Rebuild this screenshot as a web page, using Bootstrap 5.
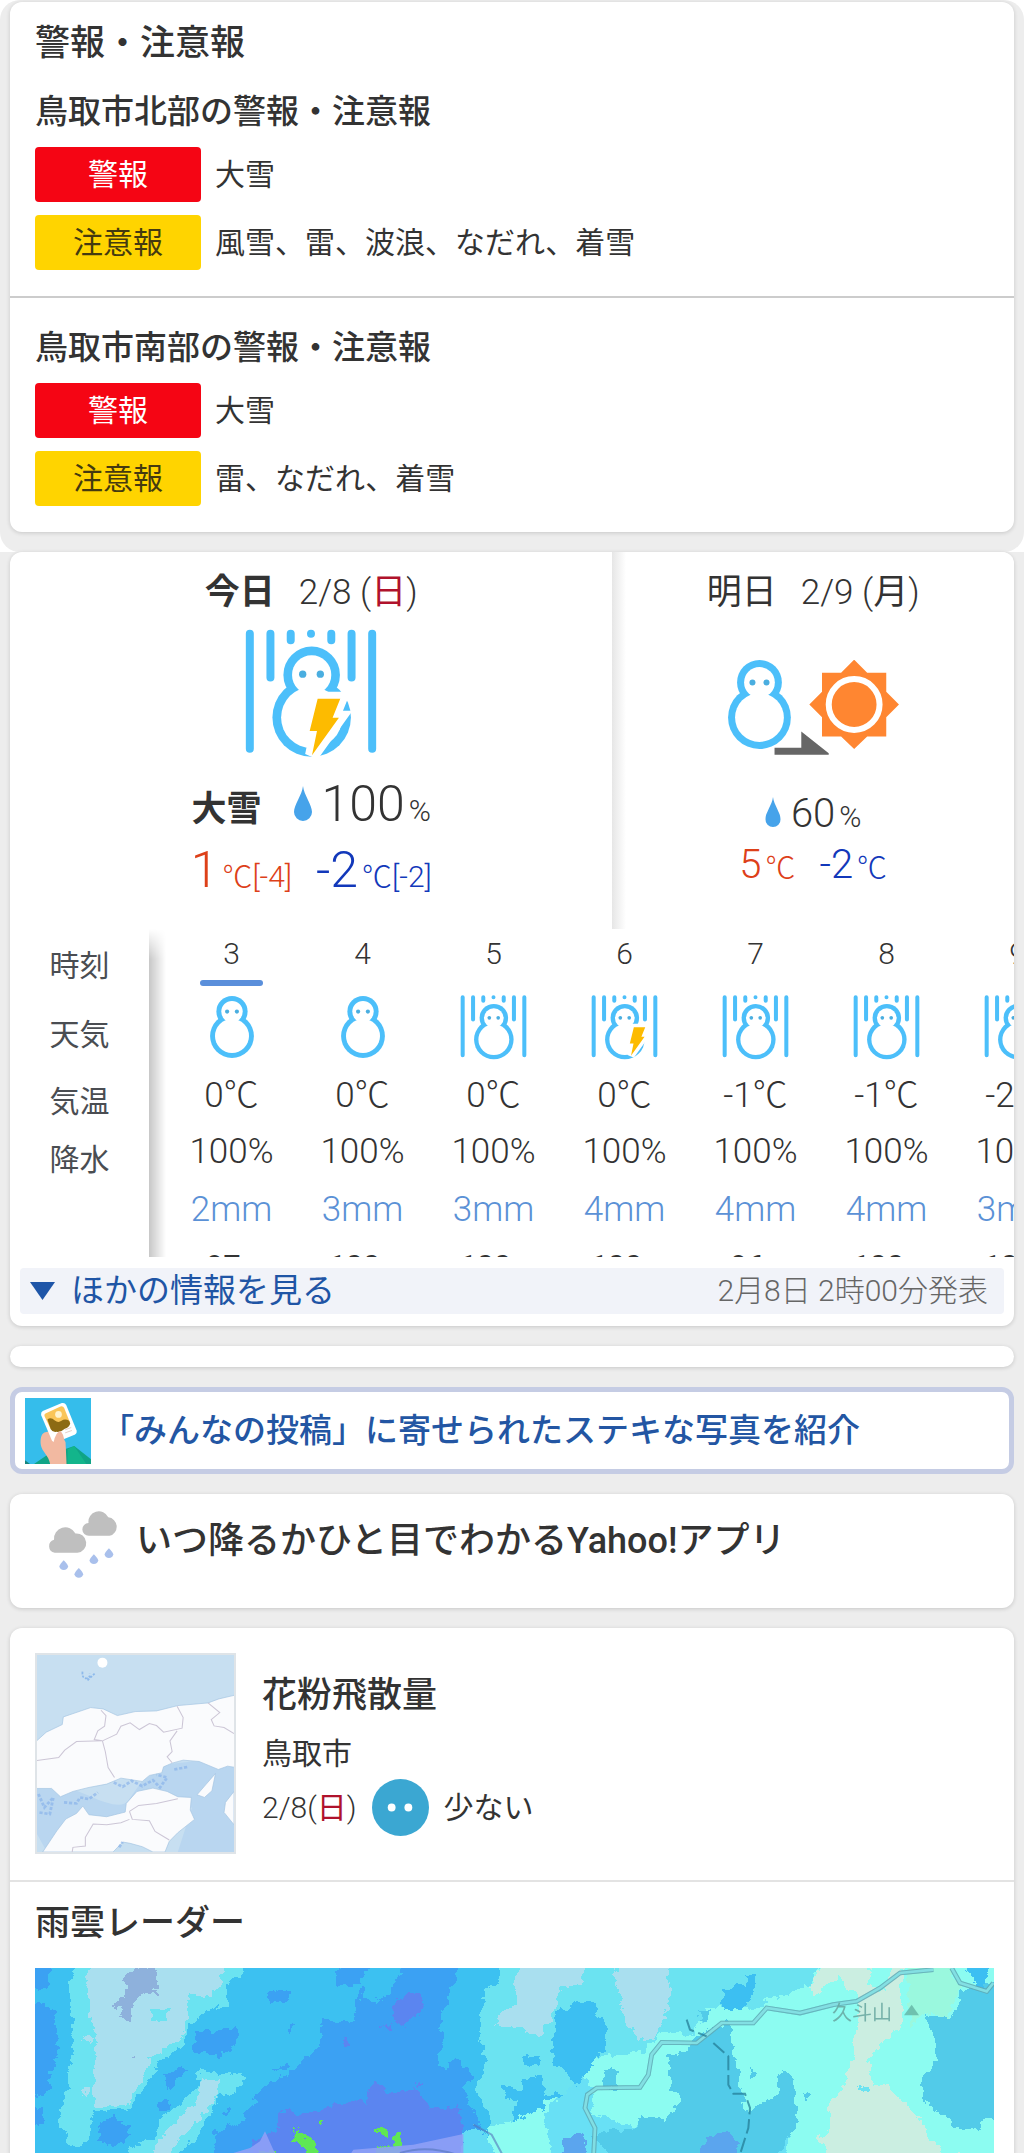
<!DOCTYPE html>
<html lang="ja">
<head>
<meta charset="utf-8">
<meta name="viewport" content="width=device-width, initial-scale=1">
<title>鳥取市の天気</title>
<link href="https://cdn.jsdelivr.net/npm/bootstrap@5.3.0/dist/css/bootstrap.min.css" rel="stylesheet">
<style>
body{background:#ededed;color:#333;font-family:Roboto,"Noto Sans CJK JP",sans-serif;font-size:30px;line-height:50px;font-weight:400}
h2,h3,p{margin:0}
svg{display:block;flex:none}
.wx-section{background:#ededed;border-radius:20px;padding:2px 10px 20px}
.wx-card{background:#fff;border-radius:12px;box-shadow:0 1px 4px rgba(0,0,0,.16);overflow:hidden}
.wx-title{font-size:35px;line-height:50px;font-weight:500}
.wx-sub{font-size:33px;line-height:50px;font-weight:500}
.warn-area{padding:25px 25px 26px}
.warn-area.first{padding-top:17px;border-bottom:2px solid #ccc}
.warn-area .wx-title{margin-bottom:18px}
.warn-area .wx-sub{margin-bottom:10px}
.warn-list{display:grid;gap:13px}
.warn-row{display:flex;align-items:center;gap:14px}
.warn-tag{width:166px;height:55px;line-height:55px;border-radius:4px;text-align:center}
.tag-red{background:#f50514;color:#fff}
.tag-yellow{background:#ffd400;color:#443a10}
.light{font-weight:300}
.strong-name{font-size:35px;line-height:1;font-weight:700}
.deg{font-family:"Noto Sans CJK JP",sans-serif}
.day{padding:20px 0 26px;text-align:center}
.day.today{width:60%}
.day.tomorrow{width:40%;background:linear-gradient(90deg,#e6e6e6,#fff 14px)}
.day-head{font-size:35px;line-height:42px}
.day-head .day-name{margin-right:24px}
.today-icon{margin:15px auto 13px}
.tomorrow-icon{margin:46px auto 33px}
.day-line{display:flex;justify-content:center;align-items:baseline;line-height:66px}
.day-line .big{font-size:50px}
.tomorrow .day-line{line-height:51px}
.tomorrow .big{font-size:40px}
.day-line .unit{font-size:30px;line-height:1;margin-left:4px}
.today .drop-icon{margin:0 10px 0 32px}
.tomorrow .drop-icon{margin-right:10px}
.hot{color:#dd4019}.cold{color:#1238ba}
.sun-day{color:#b0122c}
.hourly{position:relative;height:328px;overflow:hidden}
.hourly::after{content:"";position:absolute;left:139px;top:0;bottom:0;width:17px;background:linear-gradient(90deg,rgba(0,0,0,.22),rgba(0,0,0,0));-webkit-mask:linear-gradient(transparent,#000 30px);mask:linear-gradient(transparent,#000 30px)}
.hour-table{table-layout:fixed;width:1073px;text-align:center;font-size:35px;font-weight:300;border-collapse:collapse}
.hour-table th,.hour-table td{padding:0;height:58px;vertical-align:middle;line-height:50px}
.hour-table th[scope=row]{width:156px;padding:16px 17px 0 0;font-size:30px;font-weight:400;line-height:42px;color:#4a4d52}
.hour-table thead th{height:60px;font-size:30px;font-weight:300;vertical-align:top}
.hour-table .wx-icons>*{height:76px}
.hour-table svg{margin:0 auto}
.now-bar{display:block;width:63px;height:6px;border-radius:3px;background:#5a8fdb;margin:1px auto 0}
.rain-mm{color:#5b91d6}
.humid td{font-size:30px;font-weight:500;line-height:54px;vertical-align:top}
.humid small{font-size:22px}
.more-bar{background:#f1f3f9;border-radius:4px;margin:11px 10px 12px;height:46px;padding:0 16px 0 10px}
.more-btn{border:0;background:none;padding:0;color:#1f55a5;font-size:33px;line-height:46px}
.issued{color:#666;line-height:46px}
.blank-card{height:21px}
.post-link{border:5px solid #c5cce4;padding:5px 10px;height:87px;color:#2356a3;font-size:33px;font-weight:500;text-decoration:none;box-shadow:none;display:flex;align-items:center;gap:10px}
.app-link{height:114px;padding:17px 38px;color:#333;font-size:36px;font-weight:500;text-decoration:none;display:flex;gap:17px}
.app-link span{line-height:60px}
.wx-stack{padding:0 10px;display:grid;gap:20px}
.pollen{padding:25px 25px 26px;gap:26px;border-bottom:2px solid #e3e3e3}
.pollen-map{border:2px solid #dfe4e8}
.pollen-level{display:flex;align-items:center;gap:15px}
.radar-title{padding:17px 25px 19px}
.radar-map{padding:0 20px 0 25px}
.last-card{border-bottom-left-radius:0;border-bottom-right-radius:0}
</style>
<script src="https://cdn.jsdelivr.net/npm/bootstrap@5.3.0/dist/js/bootstrap.bundle.min.js"></script>
</head>
<body>
<svg width="0" height="0" class="position-absolute" aria-hidden="true">
<defs>
<symbol id="heavy" viewBox="196 208 396 388">
<path d="M210 222V568M272 222V354M333 222V242M394 222V222.1M455 222V242M516 222V354M578 222V568" stroke="#4cbffa" stroke-width="24" stroke-linecap="round" fill="none"/>
<g fill="#4cbffa"><circle cx="396" cy="346" r="85"/><circle cx="396" cy="474" r="118"/></g>
<g fill="#fff"><circle cx="396" cy="346" r="59"/><circle cx="396" cy="474" r="92"/></g>
<g fill="#4aaee0"><circle cx="369" cy="344" r="11"/><circle cx="422" cy="344" r="11"/></g>
</symbol>
<symbol id="bolt" viewBox="196 208 396 388"><path d="M414 418H482L459 475H478L397 588L412 515H390Z" fill="#fdbb00" stroke="#fff" stroke-width="42" paint-order="stroke"/></symbol>
<symbol id="snow" viewBox="383 362 188 266">
<g fill="#4cbffa"><circle cx="477" cy="429" r="67"/><circle cx="477" cy="534" r="94"/></g>
<g fill="#fff"><circle cx="477" cy="429" r="46"/><circle cx="477" cy="534" r="73"/></g>
<g fill="#4aaee0"><circle cx="456" cy="429" r="9"/><circle cx="498" cy="429" r="9"/></g>
</symbol>
<symbol id="drop" viewBox="0 0 18 35"><path d="M9 0C8 9 0 19 0 26A9 9 0 0 0 18 26C18 19 10 9 9 0Z" fill="#46a3ea"/></symbol>
</defs></svg>

<div class="bg-white">
<section class="wx-section">
<div class="wx-card">
<div class="warn-area first">
<h2 class="wx-title">警報・注意報</h2>
<h3 class="wx-sub">鳥取市北部の警報・注意報</h3>
<div class="warn-list">
<div class="warn-row"><span class="warn-tag tag-red">警報</span><span>大雪</span></div>
<div class="warn-row"><span class="warn-tag tag-yellow">注意報</span><span>風雪、雷、波浪、なだれ、着雪</span></div>
</div>
</div>
<div class="warn-area">
<h3 class="wx-sub">鳥取市南部の警報・注意報</h3>
<div class="warn-list">
<div class="warn-row"><span class="warn-tag tag-red">警報</span><span>大雪</span></div>
<div class="warn-row"><span class="warn-tag tag-yellow">注意報</span><span>雷、なだれ、着雪</span></div>
</div>
</div>
</div>
</section>
</div>

<main class="wx-stack">
<section class="wx-card">
<div class="d-flex">
<div class="day today">
<h2 class="day-head light"><span class="day-name strong-name">今日</span>2/8 (<span class="sun-day fw-normal">日</span>)</h2>
<svg class="today-icon" width="132" height="129" viewBox="0 0 132 129"><use href="#heavy" width="132" height="129"/><use href="#bolt" width="132" height="129"/></svg>
<p class="day-line light"><span class="strong-name">大雪</span><svg class="drop-icon" width="18" height="35"><use href="#drop"/></svg><span class="big">100</span><span class="unit">%</span></p>
<p class="day-line light"><span class="big hot">1</span><span class="unit hot"><span class="deg">℃</span>[-4]</span><span class="big cold ms-4">-2</span><span class="unit cold"><span class="deg">℃</span>[-2]</span></p>
</div>
<div class="day tomorrow">
<h2 class="day-head light"><span class="day-name fw-normal">明日</span>2/9 (<span class="fw-normal">月</span>)</h2>
<svg class="tomorrow-icon" width="171" height="95" viewBox="383 362 511 284"><use href="#snow" x="383" y="362" width="188" height="266"/><path d="M760 361L799 400H856V457L894 495L856 533V591H799L760 628L721 591H664V533L626 495L664 457V400H721Z" fill="#ff8631"/><circle cx="760" cy="495" r="76" fill="none" stroke="#fff" stroke-width="18"/><path d="M522 624H602V576L684 641V645H522Z" fill="#666"/></svg>
<p class="day-line light"><svg class="drop-icon" width="16" height="30" viewBox="0 0 18 35"><use href="#drop"/></svg><span class="big">60</span><span class="unit">%</span></p>
<p class="day-line light"><span class="big hot">5</span><span class="unit hot deg">℃</span><span class="big cold ms-4">-2</span><span class="unit cold deg">℃</span></p>
</div>
</div>
<div class="hourly">
<table class="hour-table">
<thead><tr><th scope="row">時刻</th><th scope="col">3<span class="now-bar"></span></th><th scope="col">4</th><th scope="col">5</th><th scope="col">6</th><th scope="col">7</th><th scope="col">8</th><th scope="col">9</th></tr></thead>
<tbody>
<tr class="wx-icons"><th scope="row">天気</th>
<td><svg width="44" height="62"><use href="#snow"/></svg></td>
<td><svg width="44" height="62"><use href="#snow"/></svg></td>
<td><svg width="67" height="65"><use href="#heavy"/></svg></td>
<td><svg width="67" height="65"><use href="#heavy"/><use href="#bolt" x="6" y="-3"/></svg></td>
<td><svg width="67" height="65"><use href="#heavy"/></svg></td>
<td><svg width="67" height="65"><use href="#heavy"/></svg></td>
<td><svg width="67" height="65"><use href="#heavy"/></svg></td></tr>
<tr><th scope="row">気温</th><td>0<span class="deg">℃</span></td><td>0<span class="deg">℃</span></td><td>0<span class="deg">℃</span></td><td>0<span class="deg">℃</span></td><td>-1<span class="deg">℃</span></td><td>-1<span class="deg">℃</span></td><td>-2<span class="deg">℃</span></td></tr>
<tr><th scope="row">降水</th><td>100%</td><td>100%</td><td>100%</td><td>100%</td><td>100%</td><td>100%</td><td>100%</td></tr>
<tr class="rain-mm"><th></th><td>2mm</td><td>3mm</td><td>3mm</td><td>4mm</td><td>4mm</td><td>4mm</td><td>3mm</td></tr>
<tr class="humid"><th></th><td>97<small>%</small></td><td>100<small>%</small></td><td>100<small>%</small></td><td>100<small>%</small></td><td>96<small>%</small></td><td>100<small>%</small></td><td>100<small>%</small></td></tr>
</tbody>
</table>
</div>
<div class="more-bar d-flex justify-content-between align-items-center">
<button type="button" class="more-btn d-flex align-items-center"><svg width="25" height="18" viewBox="0 0 25 18" class="me-3"><path d="M0 0H25L12.5 18Z" fill="#1e55a8"/></svg>ほかの情報を見る</button>
<span class="issued light">2月8日 2時00分発表</span>
</div>
</section>

<div class="wx-card blank-card"></div>

<a href="#" class="wx-card post-link">
<svg width="66" height="66" viewBox="75 169 197 197"><path d="M75 169H272V366H75Z" fill="#35bdeb"/><path d="M102 366L140 340L222 312L272 352V366Z" fill="#10a486"/><path d="M202 366V322L222 312L258 366Z" fill="#13b58b"/><path d="M75 355L90 366H75Z" fill="#16857c"/><path d="M150 366C146 340 125 330 122 308C120 290 124 276 133 272L170 262L196 300L199 366Z" fill="#f2b9a1"/><path d="M128 208L185 184Q194 182 198 190L229 266Q231 275 223 279L168 301Q159 303 155 295L123 220Q122 211 128 208Z" fill="#fff"/><path d="M136 215L181 194Q189 192 192 199L210 244L152 262L133 223Q132 217 136 215Z" fill="#fac559"/><circle cx="175" cy="218" r="10" fill="#fff3cf"/><path d="M142 233Q152 224 164 236Q174 244 184 237Q194 229 207 237L210 246Q206 258 194 261Q182 272 169 270Q157 272 152 262Z" fill="#8c6a13"/><path d="M195 264L213 257M195 273L215 266" stroke="#d9b6ac" stroke-width="2"/><path d="M160 302Q168 266 182 268Q190 278 192 292L196 330H160Z" fill="#f2b9a1"/></svg>
<span>「みんなの投稿」に寄せられたステキな写真を紹介</span></a>

<a href="#" class="wx-card app-link">
<svg width="71" height="67" viewBox="146 508 212 200"><g fill="#bfbfbf"><path d="M166 633A20 20 0 0 1 164 594A34 34 0 0 1 228 575A29 29 0 0 1 234 633Z"/><path d="M268 582A19 19 0 0 1 267 544A31 31 0 0 1 326 527A28 28 0 0 1 330 582Z"/></g><g fill="#a9c0ec"><path id="dr" d="M193 655Q206 668 206 674Q204 684 193 684Q182 684 180 674Q180 668 193 655Z"/><use href="#dr" x="45" y="23"/><use href="#dr" x="90" y="-18"/><use href="#dr" x="135" y="-36"/></g></svg>
<span>いつ降るかひと目でわかるYahoo!アプリ</span></a>

<section class="wx-card last-card">
<div class="pollen d-flex align-items-center">
<svg class="pollen-map" width="201" height="201" viewBox="104 102 554 592" preserveAspectRatio="none"><path d="M99 96H663V699H99Z" fill="#c7dff1"/>
<path d="M104 500Q160 480 250 525T360 540L400 480L470 430L560 420L660 440V694H500L540 560L360 600L240 590L130 690L104 640Z" fill="#b9d6f0"/>
<g fill="#fafbfd" stroke="#a5c4e2" stroke-width="2"><path d="M99 364L130 334L175 311L178 288L255 260L290 264L330 284L380 272L440 270L500 254L585 246L615 234L663 222V440L640 436L614 446L560 422L515 418L484 427L460 438L455 456L420 464L400 482L340 472L300 490L250 500L205 512L170 528L145 503H99Z"/>
<path d="M120 694L160 630L185 595L215 578L233 556L250 582L300 588L352 574L355 548L385 512L430 502L470 512L500 528L538 530L535 568L547 596L500 636L476 662L464 694H430L400 678L366 668L345 664L318 694Z"/>
<path d="M606 458L596 510L575 530L554 522L580 490Z"/><path d="M658 512L634 545L630 575L658 612Z"/></g>
<ellipse cx="288" cy="125" rx="14" ry="15" fill="#fff"/><path d="M232 152Q230 172 242 172T252 158M246 178L266 158" stroke="#8db9eb" stroke-width="5" stroke-dasharray="7 4" fill="none"/>
<g fill="none" stroke="#ccc6d6" stroke-width="3"><path d="M99 420L165 410L182 388L215 362L288 360L265 356L275 330L294 316L298 284L284 268"/><path d="M288 360L296 392L304 440L322 470M288 360L328 340L340 316L366 306L392 326L420 308L440 314L460 334L512 322L515 290L498 256"/><path d="M498 330L478 360L484 392L470 408L484 426M585 246L618 275L594 296L602 315L630 320L658 338M364 572L390 554L440 548L500 534M364 572L372 596L420 600L436 632L476 658M364 596L340 606L300 612L262 610L240 650L240 676L205 680L203 694"/></g>
<path d="M108 520L125 560L150 530L140 580L110 575M180 545L215 548L225 530L250 535L275 515M320 485L345 498L370 480L400 496L430 478L450 500L470 470L440 462M490 446L530 438M335 680L345 664" fill="none" stroke="#82ade9" stroke-width="8" stroke-dasharray="9 5" opacity=".6"/></svg>
<div>
<h2 class="wx-title mb-2">花粉飛散量</h2>
<p>鳥取市</p>
<div class="pollen-level light"><span>2/8(<span class="sun-day fw-normal">日</span>)</span><svg width="57" height="57" viewBox="0 0 58 58"><circle cx="29" cy="29" r="29" fill="#3ba7d2"/><circle cx="20" cy="29" r="4" fill="#fff"/><circle cx="37" cy="29" r="4" fill="#fff"/></svg><span class="fw-normal">少ない</span></div>
</div>
</div>
<h2 class="wx-title radar-title">雨雲レーダー</h2>
<div class="radar-map">
<svg class="w-100" height="187" viewBox="105 80 2877 561" preserveAspectRatio="none">
<defs><filter id="rough" x="-5%" y="-5%" width="110%" height="110%" color-interpolation-filters="sRGB"><feTurbulence type="fractalNoise" baseFrequency=".04" numOctaves="3" seed="4"/><feDisplacementMap in="SourceGraphic" scale="34" xChannelSelector="R" yChannelSelector="G"/></filter></defs>
<g filter="url(#rough)" shape-rendering="crispEdges">
<path d="M0 0H3100V760H0Z" fill="#3cc1f1"/>
<g fill="#3ba1f3"><path d="M60 30H148V132L120 142L60 130ZM60 210L125 188L160 205L172 300L175 345L150 400L145 450L60 470ZM60 492L130 498L128 545L60 580ZM300 545L340 522L385 560L392 580L350 618L300 600ZM495 395L560 380L540 410L500 445ZM470 485L505 472L505 510L475 505ZM585 270L640 268L712 256L712 292L690 330L650 345L580 330ZM805 155L845 142L878 152L870 175L810 190ZM868 248L885 243L882 262L868 272ZM665 505L690 505L685 530Z"/>
<path d="M1025 30H1120L1090 130L1010 130ZM1180 140L1240 30H1368V120L1345 160L1320 230L1335 310L1310 345L1330 390L1370 350L1420 400L1385 440L1440 540L1470 640L1500 700H640L645 570L720 545L790 440L880 385L960 310V240L1060 240L1080 140L1145 180ZM790 390L870 370L860 385Z"/></g>
<path d="M1090 170L1145 180L1190 110L1240 40H1120L1085 120Z" fill="#3cc1f1"/>
<g fill="#6be3f1"><path d="M240 30H750L725 105L680 125V190L610 215L570 250L550 310L470 370L445 430L385 505L280 512L265 590L240 620L195 600L200 570L180 560L185 500L205 430L220 280L210 130ZM595 390L730 400L735 415L705 455L650 470L605 570L520 660H380L400 610L460 590L480 540L600 430Z"/>
<path d="M1500 30H3040V700H1480L1470 540L1425 440L1455 390L1455 330L1432 280L1440 220L1460 140L1500 120Z"/></g>
<g fill="#a9dfef"><path d="M300 30H670L665 125L630 165L570 160L550 290L450 345L430 420L380 490L280 500L290 300L268 200L255 130ZM245 290L290 280L270 310ZM235 445L270 440L265 465ZM605 410L660 410L658 455L600 530L540 590L490 670H430L480 590L530 540L590 480Z"/>
<path d="M1575 30H1745V130L1680 140L1660 210L1625 285L1575 270L1485 250L1500 215L1555 190L1540 130ZM1850 30H2010L2005 210L1975 270L1940 305L1875 250L1865 180L1845 120Z"/></g>
<path d="M400 82H470L472 145L430 155L400 190L392 245L358 230L365 205L332 195L375 165L375 105ZM440 150L480 155L482 165L440 160ZM390 350L405 340L402 360Z" fill="#8eb1dc"/>
<path d="M450 202L508 205L490 240L460 235Z" fill="#6be3f1"/>
<path d="M1175 200L1220 155L1265 158L1275 195L1210 258L1190 240ZM1145 255L1175 245L1170 270ZM1030 305L1045 285L1048 305L1035 320ZM1100 450L1125 415L1165 460L1245 440L1290 500L1380 500L1385 640L1500 700H750L760 600L830 570L835 510L870 500L885 525L1070 475L1100 490ZM1250 415L1262 430L1250 445Z" fill="#5b85f0"/>
<path d="M1665 210L1710 205L1725 180L1780 185L1790 225L1815 250V330L1790 350L1785 400L1750 415L1725 435L1710 400L1655 360ZM2165 140L2235 130L2240 100H2270L2265 155L2240 200L2180 215L2165 190ZM1565 345L1620 350L1615 375L1575 365ZM1570 410L1625 400L1635 460L1730 450L1700 480L1540 540L1535 510L1560 480L1510 470L1512 435L1560 445Z" fill="#3cbff2"/>
<path d="M1460 560L1620 510L1640 475L1715 470L1790 350L1930 330L1980 270L2080 280L2120 200L2270 205L2320 150L2430 135L2470 30H3060V700H1440Z" fill="#8cfcf1"/>
<path d="M2350 80H2430L2400 110L2370 170L2300 170Z" fill="#6be3f1"/>
<path d="M1630 510L1745 410L1780 440V520L1920 560L2000 580L2060 560L2380 540L2360 640L2320 700H1660L1650 600Z" fill="#68e0f5"/>
<path d="M2000 340L2060 330L2080 290L2190 240V300L2215 380L2220 440L2240 520L2260 500L2330 460L2340 390L2385 410L2392 540L2350 620L2300 700H1870L1780 580L1830 570L1910 560L1925 520L1990 540L2050 470L2015 450ZM1815 385L1850 390L1848 450L1815 440ZM2250 370L2270 400L2255 420ZM2410 450L2430 460L2415 475ZM2100 205L2130 205L2120 240L2100 235ZM2775 220L2850 230L2880 180V150L3060 100V540H2940V560L2870 560L2840 530L2770 480V400L2810 360L2805 290Z" fill="#52cbe9"/>
<path d="M2890 60H2975L2950 150L2920 120Z" fill="#3cbff2"/>
<path d="M2480 30H2620L2605 130L2650 150L2670 100L2690 30H2720L2700 150L2710 250L2660 290L2605 350L2620 430L2655 430L2740 510L2830 640H3030L3020 700H2550L2450 590L2495 570L2485 480L2530 440L2560 340L2580 180L2540 130L2510 110L2440 165L2430 140Z" fill="#cbeee1"/>
<path d="M2720 50H2830L2880 140L2860 190L2840 230L2780 215L2730 250Z" fill="#9df6da" opacity=".8"/>
<path d="M1690 590L1750 575L1765 670H1680ZM2110 600L2170 570L2220 600L2210 680H2080Z" fill="#5ba5ee"/>
<path d="M1385 580L1430 550L1470 600L1500 680H1385Z" fill="#63dcf4"/>
<path d="M870 600L890 563L905 585L935 590L970 660H925L910 610ZM1125 570L1150 555L1170 570L1168 590L1150 590L1145 580ZM1185 573L1204 573L1207 620L1160 660H1130L1130 605L1180 620ZM953 543H967V557H953ZM780 628L835 632V670H780Z" fill="#5fe755"/>
<path d="M2565 440L2600 430L2605 450Z" fill="#6be3f1"/>
</g>
<path d="M680 641L750 620L780 600L795 570L820 625L830 641ZM1050 641L1060 625L1240 610L1390 578V641Z" fill="#8ea0f6" opacity=".9"/>
<path id="rd" d="M1780 660L1785 560L1755 500L1762 460L1790 440L1920 438L1945 400L1955 340L1985 303L2090 305L2165 245L2260 245L2300 200L2400 215L2500 190L2570 180L2640 140L2700 95L2800 85M2855 80L2880 125L2960 150L2980 125" fill="none" stroke="#5fa9b4" stroke-width="14" opacity=".6"/>
<use href="#rd" style="stroke:#8aeaec"/>
<path d="M1780 660L1785 560L1755 500L1762 460L1790 440L1920 438L1945 400L1955 340L1985 303L2090 305L2165 245L2260 245L2300 200L2400 215L2500 190L2570 180L2640 140L2700 95L2800 85M2855 80L2880 125L2960 150L2980 125" fill="none" stroke="#8aeaec" stroke-width="8" opacity=".8"/>
<path d="M2060 235L2070 265L2120 285M2140 305L2185 345L2185 430L2200 457H2235L2250 500L2245 560L2215 655" fill="none" stroke="#247d97" stroke-width="6" stroke-dasharray="44 14" opacity=".75"/>
<path d="M1200 635Q1280 610 1370 640M1420 550L1475 580L1510 645" fill="none" stroke="#5474ba" stroke-width="6" opacity=".6"/>
<path d="M2712 222L2735 190L2757 222Z" fill="#5da99b" opacity=".7"/>
<text x="2496" y="236" font-size="60" fill="#67a7a0" opacity=".85">久斗山</text>
</svg>
</div>
</section>
</main>
</body>
</html>
